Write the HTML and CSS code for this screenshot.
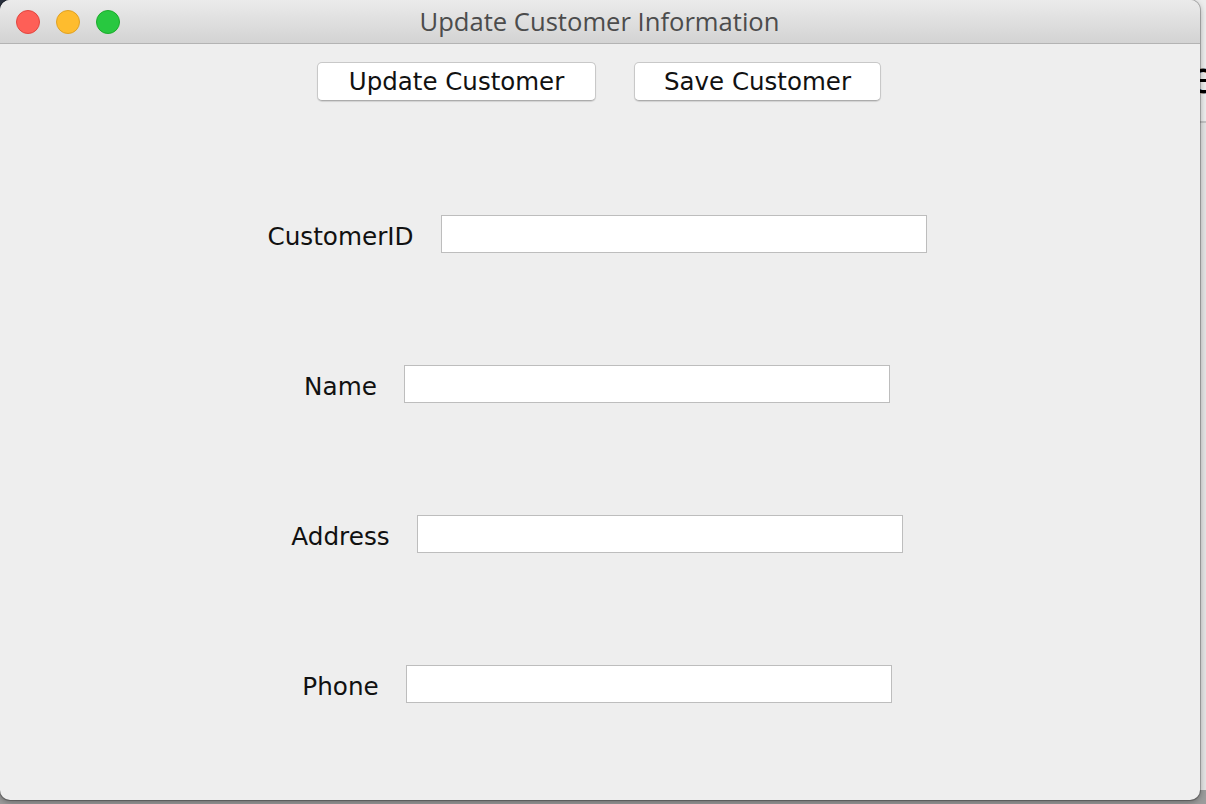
FILE: index.html
```html
<!DOCTYPE html>
<html>
<head>
<meta charset="utf-8">
<title>Update Customer Information</title>
<link rel="stylesheet" href="styles.css">
</head>
<body>
<div class="desktop">
  <div class="back-window">
    <div class="back-top"><span class="back-glyph">e</span></div>
    <div class="back-body"></div>
  </div>
  <div class="window">
    <div class="titlebar">
      <div class="lights">
        <span class="light red"></span>
        <span class="light yellow"></span>
        <span class="light green"></span>
      </div>
      <div class="title">Update Customer Information</div>
    </div>
    <div class="content">
      <div class="buttons">
        <button class="btn btn-update">Update Customer</button>
        <button class="btn btn-save">Save Customer</button>
      </div>
      <div class="form">
        <div class="row"><label class="lbl">CustomerID</label><input class="field" type="text"></div>
        <div class="row"><label class="lbl">Name</label><input class="field" type="text"></div>
        <div class="row"><label class="lbl">Address</label><input class="field" type="text"></div>
        <div class="row"><label class="lbl">Phone</label><input class="field" type="text"></div>
      </div>
    </div>
  </div>
</div>
</body>
</html>
```

FILE: styles.css
```css
html, body {
  margin: 0;
  padding: 0;
}
body {
  background: #9c9c9c;
  width: 1206px;
  height: 804px;
  overflow: hidden;
}
.desktop {
  position: relative;
  width: 1206px;
  height: 804px;
  overflow: hidden;
  background: linear-gradient(#2a3240 0, #2a3240 20px, #9c9c9c 20px);
}
.back-window {
  position: absolute;
  left: 1100px;
  top: 0;
  width: 106px;
  height: 790px;
  overflow: hidden;
  background: #ececec;
  display: flex;
  flex-direction: column;
}
.back-top {
  height: 121px;
  position: relative;
  background: #ededed;
  border-bottom: 2px solid #c4c4c4;
}
.back-glyph {
  position: absolute;
  left: 89px;
  top: 50px;
  font-family: "DejaVu Sans", sans-serif;
  font-size: 44px;
  color: #000;
  line-height: 56px;
}
.back-body {
  flex: 1;
  background: #e4e4e4;
}
.window {
  position: absolute;
  left: 0;
  top: 0;
  width: 1200px;
  height: 800px;
  border-radius: 10px;
  background: #eeeeee;
  box-shadow: 0 0 0 1px rgba(0, 0, 0, 0.22), 0 2px 6px rgba(0, 0, 0, 0.35);
  overflow: hidden;
  display: flex;
  flex-direction: column;
}
.titlebar {
  position: relative;
  height: 43px;
  background: linear-gradient(#ebebeb, #d3d3d3);
  border-bottom: 1px solid #b3b3b3;
  display: flex;
  align-items: center;
  justify-content: center;
  flex-shrink: 0;
}
.lights {
  position: absolute;
  left: 16px;
  top: 10px;
  display: flex;
  gap: 16px;
}
.light {
  width: 22px;
  height: 22px;
  border-radius: 50%;
  border: 1px solid transparent;
}
.red { background: #fe5f57; border-color: #e1463f; }
.yellow { background: #febc2e; border-color: #dfa124; }
.green { background: #28c840; border-color: #1cab2b; }
.title {
  font-family: "Open Sans", sans-serif;
  font-size: 25.6px;
  color: #4c4c4c;
  line-height: 43px;
  margin-left: -1px;
}
.content {
  flex: 1;
  display: flex;
  flex-direction: column;
  align-items: center;
}
.buttons {
  margin-top: 18px;
  display: flex;
  gap: 38px;
  padding-right: 2px;
}
.btn {
  height: 39px;
  margin: 0;
  padding: 0;
  background: #ffffff;
  border: 1px solid #c8c8c8;
  border-bottom-color: #acacac;
  border-radius: 5px;
  box-shadow: 0 1px 1px rgba(0, 0, 0, 0.12);
  font-family: "DejaVu Sans", sans-serif;
  font-size: 24.5px;
  color: #111;
  line-height: 37px;
}
.btn-update { width: 279px; }
.btn-save { width: 247px; }
.form {
  margin-top: 114px;
  display: flex;
  flex-direction: column;
  gap: 112px;
  width: 100%;
  align-items: center;
  padding-right: 6px;
  box-sizing: border-box;
}
.row {
  display: flex;
  align-items: center;
  gap: 27px;
  height: 38px;
}
.lbl {
  font-family: "DejaVu Sans", sans-serif;
  font-size: 24.7px;
  color: #111;
  line-height: 38px;
  margin-top: 5px;
}
.field {
  width: 486px;
  height: 38px;
  box-sizing: border-box;
  margin: 0;
  padding: 0 6px;
  background: #ffffff;
  border: 1px solid #bdbdbd;
  border-radius: 0;
  outline: none;
}
```
